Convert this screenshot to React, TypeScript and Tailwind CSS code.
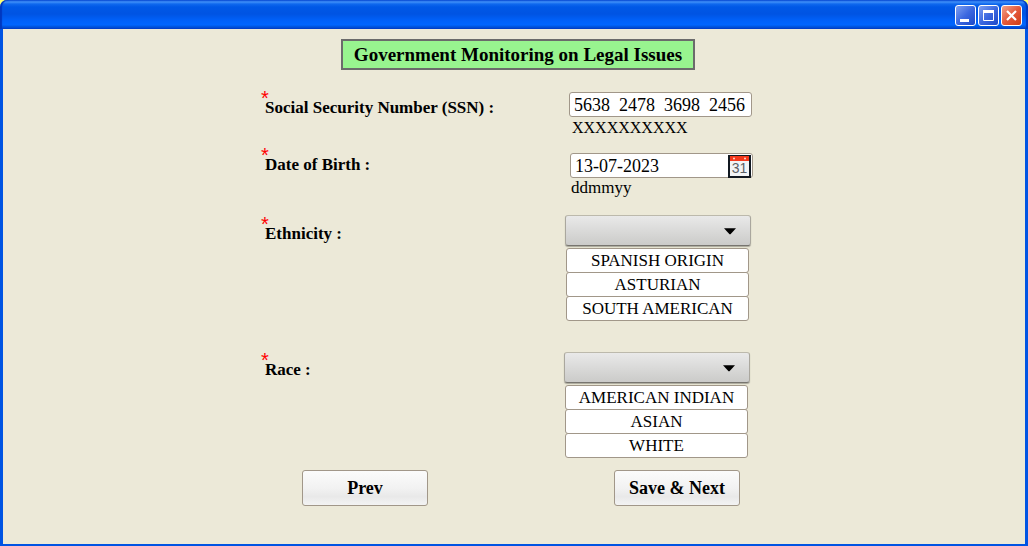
import { useState, type ReactNode } from "react";

function WindowButton({ label, tone, children }: { label: string; tone: string; children: ReactNode }) {
  return (
    <button
      type="button"
      aria-label={label}
      className={`flex size-[21px] items-center justify-center rounded-[3px] border border-white bg-linear-to-br ${tone}`}
    >
      <svg viewBox="0 0 19 19" className="size-[19px]" fill="none" stroke="#fff" aria-hidden="true">
        {children}
      </svg>
    </button>
  );
}

function TitleBar() {
  return (
    <header className="flex h-[29px] shrink-0 items-start justify-end gap-0.5 rounded-t-[7px] bg-[linear-gradient(to_bottom,#0a50d8_0px,#3f8ff8_2px,#0f68ee_4px,#0058e6_7px,#0054e3_14px,#0060f8_20px,#0066ff_25px,#005be8_26px,#003fc4_29px)] pt-[5px] pr-[6px] shadow-[inset_2px_0_1px_#0038c0,inset_-2px_0_1px_#0038c0]">
      <WindowButton label="Minimize" tone="from-[#7f9ff0] via-[#3c68e0] to-[#1c48c8]">
        <path d="M4 14.500h9" strokeWidth="3" />
      </WindowButton>
      <WindowButton label="Maximize" tone="from-[#7f9ff0] via-[#3c68e0] to-[#1c48c8]">
        <path d="M4.500 5.500h10v9h-10z" strokeWidth="1" />
        <path d="M4 5.500h11" strokeWidth="3" />
      </WindowButton>
      <WindowButton label="Close" tone="from-[#f0a088] via-[#e4593a] to-[#d03c10]">
        <path d="M5 5l9 9M14 5l-9 9" strokeWidth="2.200" />
      </WindowButton>
    </header>
  );
}

function Label({ htmlFor, children }: { htmlFor: string; children: ReactNode }) {
  return (
    <label htmlFor={htmlFor} className="relative block text-[17px] leading-5 font-bold">
      <span className="absolute -top-2 -left-1 font-['Liberation_Sans',sans-serif] text-[20px] leading-4 font-normal text-[#ff0000]">*</span>
      {children}
    </label>
  );
}

function CalendarIcon() {
  return (
    <svg viewBox="0 0 23 23" className="size-[23px]" aria-hidden="true">
      <rect x="1" y="1" width="21" height="21" fill="#f2f4f5" stroke="#111820" strokeWidth="2" />
      <rect x="2" y="1" width="19" height="5" fill="#f5391c" />
      <circle cx="6" cy="3.500" r="1" fill="#ffd8d0" />
      <circle cx="17" cy="3.500" r="1" fill="#ffd8d0" />
      <text x="11.500" y="18" textAnchor="middle" fontSize="14" fontFamily="Liberation Sans, sans-serif" fill="#5c6066">
        31
      </text>
    </svg>
  );
}

function Dropdown({ id, options }: { id: string; options: string[] }) {
  const [value, setValue] = useState("");
  return (
    <div className="w-[186px]">
      <div className="relative">
        <select
          id={id}
          value={value}
          onChange={(e) => setValue(e.target.value)}
          className="block h-[31px] w-full appearance-none rounded-[3px] border border-t-[#bcb9ac] border-r-[#aaa79e] border-b-[#77756f] border-l-[#aaa79e] bg-linear-to-b from-[#e9e9e9] to-[#cbcbc9] px-3 text-[17px] shadow-[0_1px_1px_#aaa89c]"
        >
          <option value=""></option>
          {options.map((o) => (
            <option key={o}>{o}</option>
          ))}
        </select>
        <svg viewBox="0 0 12 7" className="pointer-events-none absolute top-[13px] right-[15px] h-[7px] w-3" aria-hidden="true">
          <path d="M0 .3h12L6.500 6.300h-1z" fill="#000" />
        </svg>
      </div>
      <ul className="mt-0.5 ml-px w-[183px]">
        {options.map((o) => (
          <li key={o} className="-mb-px">
            <button
              type="button"
              onClick={() => setValue(o)}
              className="block h-[25px] w-full rounded-[3px] border border-[#a19789] bg-white text-center text-[17px] leading-[23px]"
            >
              {o}
            </button>
          </li>
        ))}
      </ul>
    </div>
  );
}

const inputStyle =
  "block h-[25px] w-[183px] rounded-[3px] border border-[#a19789] bg-white px-1 pt-0.5 text-[18px]";
const actionStyle =
  "h-9 w-[126px] rounded-[3px] border border-[#a19789] bg-[linear-gradient(to_bottom,#fbfbfb,#f2f2f2_50%,#e9e9e9_75%,#f3f3f3)] text-[18px] font-bold";

export default function App() {
  return (
    <div className="flex min-h-screen flex-col bg-[#ffff70] font-['Liberation_Serif',serif] text-black">
      <TitleBar />
      <main className="flex flex-1 flex-col items-center border-x-[3px] border-b-2 border-[#0054e3] bg-[#ece9d8] pt-2.5">
        <h1 className="ml-2 h-[31px] border-2 border-[#6b6b6b] bg-[#98f48f] px-[11px] text-[19px] leading-[28px] font-bold">
          Government Monitoring on Legal Issues
        </h1>
        <form className="mt-[22px] mr-2.5 w-full max-w-[488px]" onSubmit={(e) => e.preventDefault()}>
          <div className="flex h-[61px] items-start justify-between">
            <div className="pt-1.5">
              <Label htmlFor="ssn">Social Security Number (SSN) :</Label>
            </div>
            <div className="w-[184px]">
              <input id="ssn" defaultValue="5638  2478  3698  2456" className={inputStyle} />
              <p className="pt-px pl-[3px] text-[16px] leading-5">XXXXXXXXXX</p>
            </div>
          </div>
          <div className="flex h-[62px] items-start justify-between">
            <div className="pt-0.5">
              <Label htmlFor="dob">Date of Birth :</Label>
            </div>
            <div className="w-[183px]">
              <div className="relative">
                <input id="dob" defaultValue="13-07-2023" className={inputStyle} />
                <button type="button" aria-label="Choose date" className="absolute top-0.5 right-0.5">
                  <CalendarIcon />
                </button>
              </div>
              <p className="pl-px text-[17px] leading-5">ddmmyy</p>
            </div>
          </div>
          <div className="flex h-[137px] items-start justify-between">
            <div className="pt-[9px]">
              <Label htmlFor="ethnicity">Ethnicity :</Label>
            </div>
            <div className="w-[188px]">
              <Dropdown id="ethnicity" options={["SPANISH ORIGIN", "ASTURIAN", "SOUTH AMERICAN"]} />
            </div>
          </div>
          <div className="flex h-[118px] items-start justify-between">
            <div className="pt-2">
              <Label htmlFor="race">Race :</Label>
            </div>
            <div className="w-[189px]">
              <Dropdown id="race" options={["AMERICAN INDIAN", "ASIAN", "WHITE"]} />
            </div>
          </div>
          <div className="flex justify-between pr-[13px] pl-[37px]">
            <button type="button" className={actionStyle}>Prev</button>
            <button type="submit" className={actionStyle}>Save &amp; Next</button>
          </div>
        </form>
      </main>
    </div>
  );
}
